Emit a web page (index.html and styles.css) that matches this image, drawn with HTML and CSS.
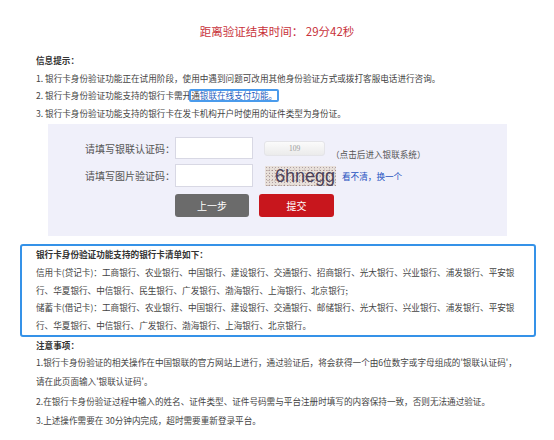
FILE: index.html
```html
<!DOCTYPE html>
<html lang="zh-CN">
<head>
<meta charset="utf-8">
<title>银行卡身份验证</title>
<link rel="stylesheet" href="styles.css">
</head>
<body>
<div class="page">
  <h1 class="timer">距离验证结束时间： 29分42秒</h1>
  <div class="info">
    <div class="info-title">信息提示：</div>
    <p>1. 银行卡身份验证功能正在试用阶段，使用中遇到问题可改用其他身份验证方式或拨打客服电话进行咨询。</p>
    <p>2. 银行卡身份验证功能支持的银行卡需开<span class="focus">通<span class="link">银联在线支付功能。</span></span></p>
    <p>3. 银行卡身份验证功能支持的银行卡在发卡机构开户时使用的证件类型为身份证。</p>
  </div>
  <div class="panel">
    <div class="row r1">
      <label class="lbl">请填写银联认证码：</label>
      <input class="field" type="text">
      <button class="btn-code" type="button">109</button>
      <span class="hint">（点击后进入银联系统）</span>
    </div>
    <div class="row r2">
      <label class="lbl">请填写图片验证码：</label>
      <input class="field field2" type="text">
      <div class="captcha"><span>6hnegg</span></div>
      <a class="refresh">看不清，换一个</a>
    </div>
    <div class="row r3">
      <button class="btn btn-back" type="button">上一步</button>
      <button class="btn btn-submit" type="button">提交</button>
    </div>
  </div>
  <div class="banks">
    <div class="banks-title">银行卡身份验证功能支持的银行卡清单如下：</div>
    <p>信用卡(贷记卡)：工商银行、农业银行、中国银行、建设银行、交通银行、招商银行、光大银行、兴业银行、浦发银行、平安银行、华夏银行、中信银行、民生银行、广发银行、渤海银行、上海银行、北京银行;</p>
    <p>储蓄卡(借记卡)：工商银行、农业银行、中国银行、建设银行、交通银行、邮储银行、光大银行、兴业银行、浦发银行、平安银行、华夏银行、中信银行、广发银行、渤海银行、上海银行、北京银行。</p>
  </div>
  <div class="notes">
    <div class="notes-title">注意事项：</div>
    <p>1.银行卡身份验证的相关操作在中国银联的官方网站上进行，通过验证后，将会获得一个由6位数字或字母组成的'银联认证码'，<br>请在此页面输入'银联认证码'。</p>
    <p>2.在银行卡身份验证过程中输入的姓名、证件类型、证件号码需与平台注册时填写的内容保持一致，否则无法通过验证。</p>
    <p>3.上述操作需要在 30分钟内完成，超时需要重新登录平台。</p>
  </div>
</div>
</body>
</html>
```

FILE: styles.css
```css
* {
  box-sizing: border-box;
  margin: 0;
  padding: 0;
}

body {
  margin: 0;
  background: #ffffff;
  font-family: "Noto Sans CJK SC", "Noto Sans", sans-serif;
  font-size: 8.6px;
  color: #444444;
}

button,
input {
  font-family: inherit;
}

.timer {
  padding-top: 22px;
  font-size: 11.5px;
  line-height: 18px;
  font-weight: normal;
  color: #c8323a;
  text-align: center;
}

.info {
  padding: 12px 0 0 36px;
  line-height: 17.5px;
}

.info-title {
  font-weight: bold;
  color: #333333;
}

.focus {
  display: inline-block;
  margin-left: -2px;
  border: 2px solid #4a9bec;
  border-radius: 2px;
  line-height: 9px;
}

.link {
  color: #1f5fbf;
}

.panel {
  margin: 2px 0 0 48px;
  width: 459px;
  height: 112px;
  padding-top: 13px;
  background: #f0f0fa;
}

.row {
  display: flex;
  align-items: center;
}

.lbl {
  width: 127px;
  text-align: right;
  font-size: 10px;
  color: #555555;
}

.field {
  width: 78px;
  height: 22px;
  border: 1px solid #d8d8e4;
  background: #ffffff;
}

.r2 {
  margin-top: 5px;
}

.field2 {
  height: 23px;
}

.btn-code {
  margin-left: 11px;
  width: 61px;
  height: 15px;
  border: 1px solid #e4e4e8;
  border-radius: 3px;
  background: linear-gradient(#fbfbfb, #ebebeb);
  color: #9a9a9a;
  font-family: "Liberation Serif", serif;
  font-size: 7.5px;
}

.hint {
  margin-left: 6px;
  align-self: flex-end;
  line-height: 10px;
  color: #555555;
}

.captcha {
  margin-left: 12px;
  width: 71px;
  height: 20px;
  padding-left: 10px;
  background-color: #e8e0da;
  background-image:
    radial-gradient(rgba(110, 80, 95, 0.45) 0.5px, transparent 0.9px),
    radial-gradient(rgba(160, 130, 115, 0.4) 0.5px, transparent 0.9px),
    radial-gradient(rgba(90, 90, 110, 0.3) 0.4px, transparent 0.8px);
  background-size: 3px 3px, 4px 5px, 5px 4px;
  background-position: 0 0, 1px 2px, 2px 1px;
  font-family: "Liberation Sans", Arial, sans-serif;
  font-size: 18px;
  line-height: 20px;
  color: #4a4058;
  overflow: hidden;
}

.refresh {
  margin-left: 6px;
  color: #2450c0;
  cursor: pointer;
}

.r3 {
  margin-top: 7px;
  padding-left: 127px;
  gap: 10px;
}

.btn {
  height: 23px;
  border: 0;
  border-radius: 3px;
  color: #ffffff;
  font-size: 10px;
}

.btn-back {
  width: 74px;
  background: #6b6b6b;
}

.btn-submit {
  width: 75px;
  background: #c8161d;
}

.banks {
  margin: 8px 0 0 20px;
  width: 516px;
  padding: 0 15px 0 14px;
  border: 2px solid #3592e8;
  border-radius: 3px;
  line-height: 17.8px;
}

.banks-title {
  font-weight: bold;
  color: #333333;
}

.notes {
  padding-left: 36px;
}

.notes-title {
  line-height: 16px;
  font-weight: bold;
  color: #333333;
}

.notes p {
  line-height: 19.5px;
}
```
